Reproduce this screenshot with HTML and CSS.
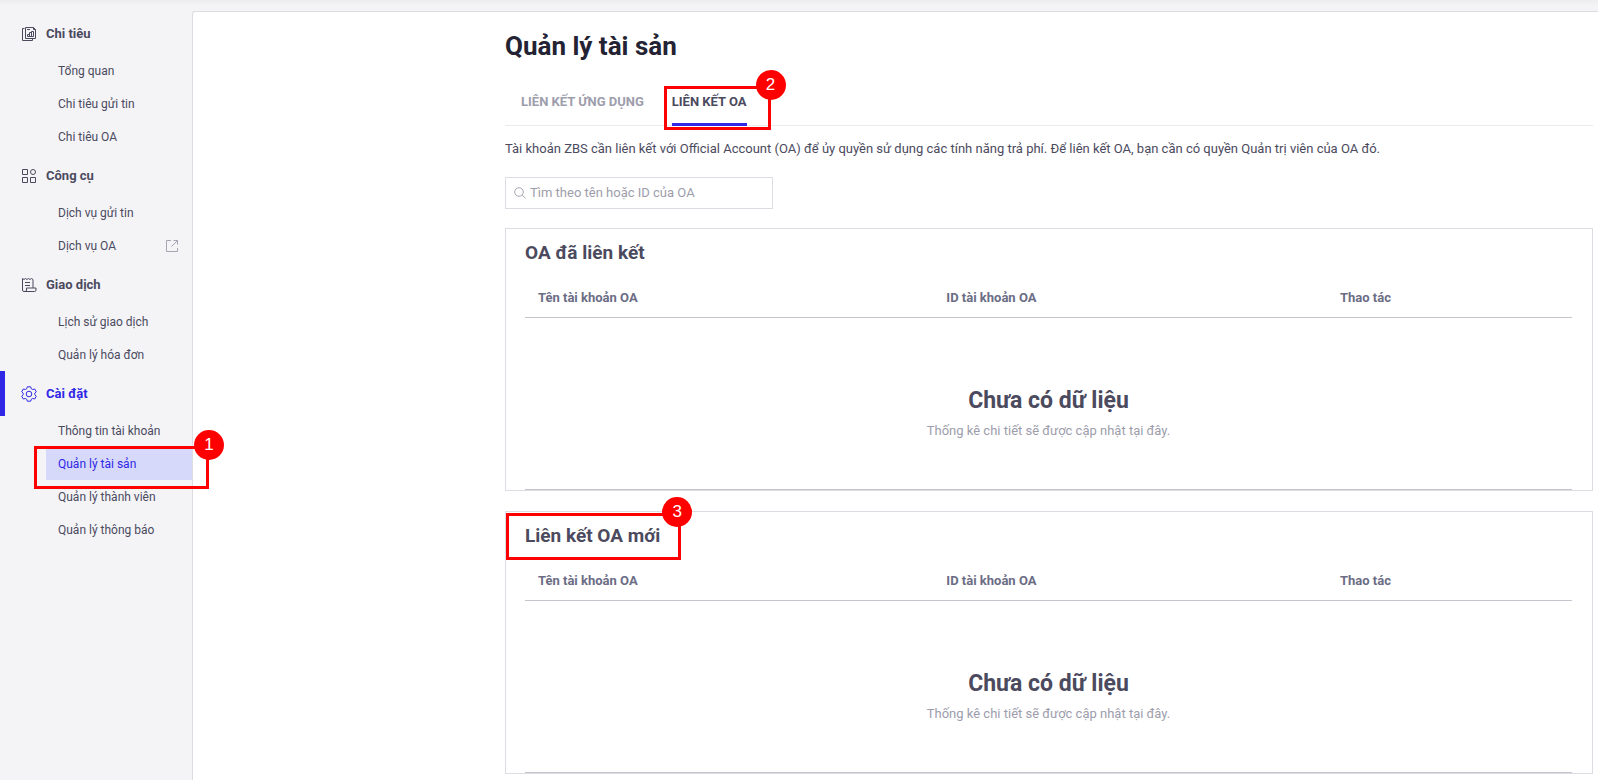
FILE: index.html
```html
<!DOCTYPE html>
<html lang="vi">
<head>
<meta charset="utf-8">
<meta name="viewport" content="width=device-width, initial-scale=1">
<title>Quản lý tài sản</title>
<link rel="stylesheet" href="styles.css">
</head>
<body>
<div class="app">
  <nav class="sidebar" aria-label="Menu">
    <section class="group">
      <a class="group-title" href="#">
        <svg class="icon" viewBox="0 0 16 16"><path d="M3.500 2.500H1.500v12h10v-1.500M4.500 1.500h8l2 2v9h-10zM12.500 1.500v2h2M6 3.500h3"/><path d="M6.500 8.500h2v2h-2zM8.500 6.500h2v4h-2zM10.500 5.500h2v5h-2z"/></svg>
        Chi tiêu
      </a>
      <ul class="items">
        <li class="item"><a href="#">Tổng quan</a></li>
        <li class="item"><a href="#">Chi tiêu gửi tin</a></li>
        <li class="item"><a href="#">Chi tiêu OA</a></li>
      </ul>
    </section>
    <section class="group">
      <a class="group-title" href="#">
        <svg class="icon" viewBox="0 0 16 16"><path d="M1.500 1.500h5v5h-5zM1.500 9.500h5v5h-5zM9.500 9.500h5v5h-5z"/><circle cx="12" cy="4" r="2.500"/></svg>
        Công cụ
      </a>
      <ul class="items">
        <li class="item"><a href="#">Dịch vụ gửi tin</a></li>
        <li class="item"><a href="#">Dịch vụ OA <svg class="external" viewBox="0 0 12 12"><path d="M5 .5H.5v11h11V8M7.500.5h4v4M11.500.5l-6 6"/></svg></a></li>
      </ul>
    </section>
    <section class="group">
      <a class="group-title" href="#">
        <svg class="icon" viewBox="0 0 16 16"><path d="M4.500 14.500h-1.500a1.500 1.500 0 0 1-1.500-1.500V1.500l1.500 1 1.500-1 1.500 1 1.500-1 1.500 1 1.500-1 1.500 1V11M3 14.500h10.500a1.500 1.500 0 0 0 1.500-1.500v-2H5.500v2a1.500 1.500 0 0 1-1.500 1.500M4 5.500h5M4 8.500h5"/></svg>
        Giao dịch
      </a>
      <ul class="items">
        <li class="item"><a href="#">Lịch sử giao dịch</a></li>
        <li class="item"><a href="#">Quản lý hóa đơn</a></li>
      </ul>
    </section>
    <section class="group">
      <a class="group-title group-title-active" href="#">
        <svg class="icon" viewBox="0 0 16 16"><path stroke-linejoin="round" d="M6.300.8h3.400l.6 2 1.300.7 2.100-.5 1.600 2.800L13.800 7.200v1.600l1.500 1.400-1.600 2.800-2.100-.5-1.300.7-.6 2H6.300l-.6-2-1.300-.7-2.100.5L.7 10.200l1.500-1.400V7.200L.7 5.800 2.300 3l2.100.5 1.300-.7z"/><circle cx="8" cy="8" r="2.800"/></svg>
        Cài đặt
      </a>
      <ul class="items">
        <li class="item"><a href="#">Thông tin tài khoản</a></li>
        <li class="item item-active"><a href="#" aria-current="page">Quản lý tài sản</a><span class="mark mark-menu"><span class="mark-number">1</span></span></li>
        <li class="item"><a href="#">Quản lý thành viên</a></li>
        <li class="item"><a href="#">Quản lý thông báo</a></li>
      </ul>
    </section>
  </nav>

  <main class="main">
    <h1 class="title">Quản lý tài sản</h1>
    <div class="tabs" role="tablist">
      <button class="tab" type="button" role="tab" aria-selected="false">LIÊN KẾT ỨNG DỤNG</button>
      <button class="tab tab-active" type="button" role="tab" aria-selected="true">LIÊN KẾT OA<span class="mark mark-tab"><span class="mark-number">2</span></span></button>
    </div>
    <p class="description">Tài khoản ZBS cần liên kết với Official Account (OA) để ủy quyền sử dụng các tính năng trả phí. Để liên kết OA, bạn cần có quyền Quản trị viên của OA đó.</p>
    <label class="search">
      <svg class="search-icon" viewBox="0 0 12 12"><circle cx="5" cy="5" r="4.300"/><path d="M8.200 8.200l3.300 3"/></svg>
      <input class="search-input" type="text" placeholder="Tìm theo tên hoặc ID của OA" aria-label="Tìm theo tên hoặc ID của OA">
    </label>

    <section class="card">
      <h2 class="card-title">OA đã liên kết</h2>
      <table class="table">
        <thead>
          <tr><th class="col-name">Tên tài khoản OA</th><th class="col-id">ID tài khoản OA</th><th class="col-action">Thao tác</th></tr>
        </thead>
        <tbody>
          <tr><td class="empty" colspan="3"><p class="empty-title">Chưa có dữ liệu</p><p class="empty-text">Thống kê chi tiết sẽ được cập nhật tại đây.</p></td></tr>
        </tbody>
      </table>
    </section>

    <section class="card">
      <h2 class="card-title">Liên kết OA mới<span class="mark mark-card"><span class="mark-number">3</span></span></h2>
      <table class="table">
        <thead>
          <tr><th class="col-name">Tên tài khoản OA</th><th class="col-id">ID tài khoản OA</th><th class="col-action">Thao tác</th></tr>
        </thead>
        <tbody>
          <tr><td class="empty" colspan="3"><p class="empty-title">Chưa có dữ liệu</p><p class="empty-text">Thống kê chi tiết sẽ được cập nhật tại đây.</p></td></tr>
        </tbody>
      </table>
    </section>
  </main>
</div>
</body>
</html>
```
FILE: styles.css
```css
* { box-sizing: border-box; }

body {
  margin: 0;
  background: #f4f4f7 linear-gradient(#ededf0, #f4f4f7) 0 0 / 100% 6px no-repeat;
  color: #4b4a5e;
  font-family: Roboto, "Noto Sans", sans-serif;
  font-size: 13px;
  line-height: 20px;
}

h1, h2, p, ul { margin: 0; padding: 0; }
ul { list-style: none; }
a { color: inherit; text-decoration: none; }
svg { fill: none; stroke: currentColor; }

.app {
  display: grid;
  grid-template-columns: 192px minmax(0, 1fr);
  min-height: 100vh;
  padding-top: 11px;
}

/* Sidebar */
.group-title {
  display: flex;
  align-items: center;
  gap: 9px;
  height: 45px;
  padding-left: 16px;
  border-left: 5px solid transparent;
  font-weight: 700;
}
.group-title-active { border-color: #2f27e5; color: #2f27e5; }
.icon { width: 16px; height: 16px; }
.items { margin-top: -2px; }
.item { position: relative; margin-left: 46px; font-size: 12px; }
.item a {
  display: flex;
  align-items: center;
  justify-content: space-between;
  height: 33px;
  padding: 0 14px 0 12px;
}
.item-active { background: #d6d9fa; color: #2f27e5; }
.external { width: 12px; height: 12px; color: #a5a5b3; }

/* Main panel */
.main {
  padding: 18px 5px 6px 312px;
  border: 1px solid #dcdce3;
  border-width: 1px 0 0 1px;
  border-radius: 3px 0 0 0;
  background: #fff;
}
.title { color: #242333; font-size: 26px; line-height: 32px; font-weight: 700; }

.tabs {
  display: flex;
  gap: 28px;
  margin-top: 30px;
  padding-left: 16px;
  border-bottom: 1px solid #ebebef;
}
.tab {
  position: relative;
  margin: 0 0 -1px;
  padding: 0 0 11px;
  border: 0;
  border-bottom: 3px solid transparent;
  background: none;
  color: #9d9dac;
  font: 700 13px/20px Roboto, "Noto Sans", sans-serif;
}
.tab-active { border-color: #2f27e5; color: #4b4a5e; }

.description { margin-top: 13px; }

.search {
  display: flex;
  align-items: center;
  gap: 4px;
  width: 268px;
  height: 32px;
  margin-top: 18px;
  padding: 0 8px;
  border: 1px solid #dcdce3;
  color: #a5a5b3;
}
.search-icon { flex: none; width: 12px; height: 12px; }
.search-input {
  flex: 1;
  min-width: 0;
  padding: 0;
  border: 0;
  outline: 0;
  background: none;
  color: #4b4a5e;
  font: inherit;
}
.search-input::placeholder { color: #9d9dac; opacity: 1; }

/* Cards */
.card { margin-top: 19px; padding: 10px 20px 0 19px; border: 1px solid #dcdce3; }
.card + .card { margin-top: 20px; }
.card-title {
  position: relative;
  width: fit-content;
  font-size: 19px;
  line-height: 28px;
  font-weight: 700;
}
.table { width: 100%; border-collapse: separate; border-spacing: 0; table-layout: fixed; }
.table th {
  padding: 21px 13px 9px;
  border-bottom: 1px solid #c5c5d0;
  color: #6b6d85;
  font-weight: 700;
  text-align: left;
}
.table .col-name { width: 39%; }
.table .col-action { width: 245px; }
.empty { padding: 67px 0 48px; border-bottom: 1px solid #c5c5d0; text-align: center; }
.empty-title { margin-bottom: 4px; font-size: 23px; line-height: 32px; font-weight: 700; }
.empty-text { color: #9d9dac; }

/* Numbered step marks laid over the page */
.mark { position: absolute; z-index: 2; border: 3px solid #f00; pointer-events: none; }
.mark-number {
  position: absolute;
  top: -19px;
  right: -18px;
  width: 30px;
  height: 30px;
  border-radius: 50%;
  background: #f00;
  color: #fff;
  font: 400 17px/30px "Liberation Sans", Arial, sans-serif;
  text-align: center;
}
.mark-menu { inset: -1px -17px -9px -12px; }
.mark-tab { inset: -6px -24px -7px -8px; }
.mark-card { inset: -9px -21px -10px -19px; }
.mark-card .mark-number { right: -14px; }
```
